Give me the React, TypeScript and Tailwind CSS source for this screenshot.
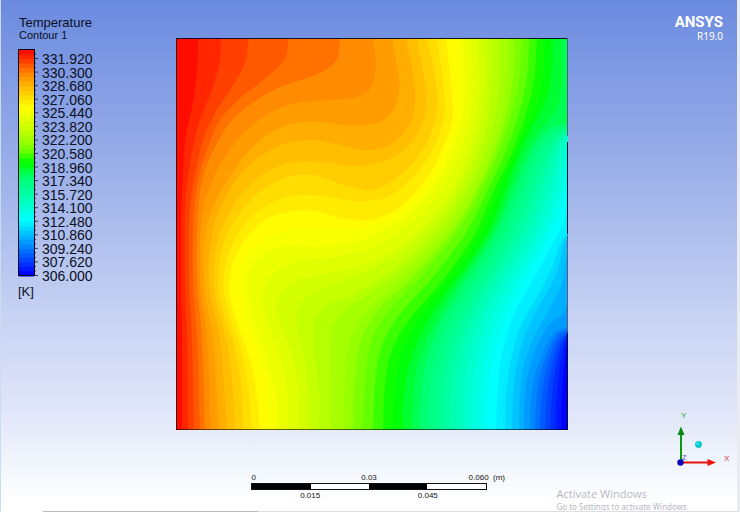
type Point = [number, number];
type Stop = [number, number, number, number];

const BANDS = 50;
const LEFT = 176;
const TOP = 38;
const RIGHT = 568;
const BOTTOM = 430;

const labels = [
  "331.920", "330.300", "328.680", "327.060", "325.440", "323.820",
  "322.200", "320.580", "318.960", "317.340", "315.720", "314.100",
  "312.480", "310.860", "309.240", "307.620", "306.000",
];

// Rainbow colour map: band index, red, green, blue.
const stops: Stop[] = [
  [0, 255, 12, 0],
  [5, 255, 140, 0],
  [7, 255, 174, 0],
  [12, 255, 252, 0],
  [13, 248, 255, 0],
  [16, 212, 255, 0],
  [20, 150, 255, 0],
  [22, 100, 255, 0],
  [24, 15, 255, 0],
  [25, 0, 255, 10],
  [26, 0, 255, 50],
  [28, 0, 255, 115],
  [31, 0, 255, 160],
  [36, 0, 255, 238],
  [37, 0, 255, 255],
  [38, 0, 238, 255],
  [40, 0, 195, 255],
  [43, 0, 135, 255],
  [46, 0, 68, 255],
  [49, 0, 0, 255],
];

// Isotherms traced from their upper end to the floor of the cavity.
const isotherms: { level: number; points: Point[] }[] = [
  { level: 1, points: [[198, 38], [197, 70], [192, 107], [185, 140], [183, 177], [181, 213], [181, 290], [182, 340], [182, 430]] },
  { level: 2, points: [[221, 38], [220, 60], [212, 90], [200, 120], [193, 147], [188, 177], [185, 213], [185, 290], [187, 340], [188, 430]] },
  { level: 3, points: [[249, 38], [245, 63], [232, 87], [215, 113], [203, 140], [196, 170], [190, 207], [189, 280], [192, 340], [194, 430]] },
  { level: 4, points: [[289, 38], [285, 58], [267, 77], [240, 98], [220, 120], [207, 150], [198, 180], [194, 213], [193, 280], [197, 340], [200, 430]] },
  { level: 5, points: [[340, 38], [338, 57], [330, 67], [310, 77], [283, 86], [257, 100], [232, 120], [215, 147], [203, 177], [198, 213], [197, 280], [202, 340], [205, 430]] },
  { level: 6, points: [[373, 38], [376, 62], [374, 80], [369, 90], [357, 97], [320, 101], [293, 104], [267, 115], [240, 137], [223, 160], [210, 187], [202, 217], [200, 280], [207, 340], [211, 430]] },
  { level: 7, points: [[392, 38], [398, 70], [399, 93], [393, 110], [380, 122], [365, 125], [345, 125], [320, 122], [297, 123], [273, 131], [247, 153], [230, 177], [215, 203], [206, 230], [204, 285], [213, 340], [219, 430]] },
  { level: 8, points: [[406, 38], [413, 75], [415, 103], [409, 125], [393, 143], [370, 150], [345, 146], [313, 140], [287, 143], [262, 155], [240, 175], [224, 200], [213, 230], [209, 285], [220, 340], [227, 430]] },
  { level: 10, points: [[427, 38], [436, 85], [437, 112], [428, 140], [408, 168], [387, 184], [370, 190], [345, 185], [313, 175], [288, 177], [262, 190], [242, 210], [226, 237], [219, 265], [219, 290], [225, 318], [234, 345], [241, 385], [243, 430]] },
  { level: 12, points: [[446, 38], [452, 97], [452, 120], [443, 148], [425, 180], [400, 207], [370, 220], [345, 219], [315, 211], [290, 211], [265, 220], [245, 240], [232, 265], [229, 290], [236, 320], [247, 350], [256, 390], [260, 430]] },
  { level: 14, points: [[463, 38], [465, 97], [455, 145], [435, 185], [405, 217], [370, 237], [340, 245], [317, 247], [290, 246], [267, 252], [253, 264], [248, 283], [250, 305], [258, 333], [268, 362], [276, 395], [278, 430]] },
  { level: 16, points: [[478, 38], [479, 97], [472, 140], [452, 190], [420, 230], [390, 253], [370, 262], [345, 270], [320, 275], [297, 280], [282, 290], [276, 305], [281, 325], [291, 352], [298, 390], [299, 430]] },
  { level: 18, points: [[492, 38], [491, 97], [482, 145], [463, 190], [433, 233], [400, 265], [370, 285], [350, 296], [327, 306], [316, 317], [313, 332], [315, 355], [319, 390], [319, 430]] },
  { level: 20, points: [[508, 38], [506, 90], [497, 135], [480, 180], [453, 225], [420, 262], [390, 290], [370, 307], [356, 325], [349, 345], [345, 380], [343, 430]] },
  { level: 22, points: [[522, 38], [519, 80], [508, 125], [490, 172], [462, 225], [425, 272], [388, 312], [371, 342], [365, 380], [363, 430]] },
  { level: 24, points: [[537, 38], [534, 80], [525, 117], [510, 157], [493, 192], [478, 228], [463, 253], [437, 287], [407, 323], [391, 353], [385, 385], [383, 430]] },
  { level: 26, points: [[553, 38], [551, 80], [543, 108], [528, 135], [514, 167], [502, 200], [490, 230], [470, 262], [445, 295], [423, 330], [410, 363], [404, 397], [403, 430]] },
  { level: 27, points: [[562, 38], [562, 85], [557, 108], [540, 130], [524, 155], [511, 187], [496, 225], [477, 257], [452, 293], [431, 330], [418, 363], [413, 397], [412, 430]] },
  { level: 28, points: [[568, 124], [555, 126], [540, 138], [527, 160], [515, 190], [500, 225], [482, 257], [458, 293], [437, 330], [426, 363], [421, 397], [420, 430]] },
  { level: 30, points: [[568, 131], [560, 133], [548, 145], [535, 170], [523, 200], [509, 232], [491, 263], [468, 300], [450, 335], [440, 370], [436, 400], [435, 430]] },
  { level: 34, points: [[568, 135], [562, 147], [555, 175], [544, 207], [530, 237], [511, 268], [489, 305], [474, 340], [466, 380], [464, 430]] },
  { level: 37, points: [[568, 168], [564, 200], [556, 222], [542, 250], [524, 282], [505, 320], [494, 355], [488, 390], [486, 430]] },
  { level: 38, points: [[568, 205], [564, 222], [553, 243], [537, 273], [515, 312], [504, 345], [498, 385], [496, 430]] },
  { level: 39, points: [[568, 233], [560, 245], [552, 267], [537, 297], [520, 327], [512, 355], [506, 392], [505, 430]] },
  { level: 40, points: [[568, 236], [564, 243], [559, 265], [551, 285], [538, 308], [526, 332], [517, 363], [513, 397], [512, 430]] },
  { level: 41, points: [[568, 238], [566, 258], [562, 283], [552, 305], [535, 335], [524, 365], [520, 397], [519, 430]] },
  { level: 42, points: [[568, 300], [564, 312], [550, 324], [539, 342], [529, 370], [525, 397], [524, 430]] },
  { level: 43, points: [[568, 327], [556, 331], [545, 348], [535, 375], [531, 402], [530, 430]] },
  { level: 46, points: [[568, 332], [560, 341], [552, 365], [547, 395], [545, 430]] },
  { level: 49, points: [[568, 335], [565, 358], [562, 390], [561, 430]] },
];

function bandColor(index: number) {
  let i = 0;
  while (i < stops.length - 2 && stops[i + 1][0] <= index) i++;
  const a = stops[i];
  const b = stops[i + 1];
  const t = (index - a[0]) / (b[0] - a[0]);
  const mix = (k: number) => Math.round(a[k] + (b[k] - a[k]) * t);
  return `rgb(${mix(1)},${mix(2)},${mix(3)})`;
}

function smooth(points: Point[]): Point[] {
  const out: Point[] = [];
  for (let i = 0; i < points.length - 1; i++) {
    const p0 = points[Math.max(0, i - 1)];
    const p1 = points[i];
    const p2 = points[i + 1];
    const p3 = points[Math.min(points.length - 1, i + 2)];
    const d1 = Math.sqrt(Math.hypot(p1[0] - p0[0], p1[1] - p0[1])) || 1;
    const d2 = Math.sqrt(Math.hypot(p2[0] - p1[0], p2[1] - p1[1])) || 1;
    const d3 = Math.sqrt(Math.hypot(p3[0] - p2[0], p3[1] - p2[1])) || 1;
    const m1 = [0, 1].map((k) =>
      i === 0 ? p2[k] - p1[k] : p2[k] - p1[k] + d2 * ((p1[k] - p0[k]) / d1 - (p2[k] - p0[k]) / (d1 + d2)));
    const m2 = [0, 1].map((k) =>
      i === points.length - 2 ? p2[k] - p1[k] : p2[k] - p1[k] + d2 * ((p3[k] - p2[k]) / d3 - (p3[k] - p1[k]) / (d2 + d3)));
    for (let s = 0; s < 10; s++) {
      const t = s / 10;
      const h = [2 * t ** 3 - 3 * t ** 2 + 1, t ** 3 - 2 * t ** 2 + t, -2 * t ** 3 + 3 * t ** 2, t ** 3 - t ** 2];
      out.push([0, 1].map((k) => h[0] * p1[k] + h[1] * m1[k] + h[2] * p2[k] + h[3] * m2[k]) as Point);
    }
  }
  out.push(points[points.length - 1]);
  return out;
}

function resample(points: Point[], count: number): Point[] {
  const lengths = [0];
  for (let i = 1; i < points.length; i++) {
    lengths.push(lengths[i - 1] + Math.hypot(points[i][0] - points[i - 1][0], points[i][1] - points[i - 1][1]));
  }
  const total = lengths[lengths.length - 1];
  const out: Point[] = [];
  let j = 0;
  for (let i = 0; i <= count; i++) {
    const target = (total * i) / count;
    while (j < points.length - 2 && lengths[j + 1] < target) j++;
    const t = (target - lengths[j]) / (lengths[j + 1] - lengths[j] || 1);
    out.push([
      points[j][0] + (points[j + 1][0] - points[j][0]) * t,
      points[j][1] + (points[j + 1][1] - points[j][1]) * t,
    ]);
  }
  return out;
}

const curves = isotherms.map(({ level, points }) => ({ level, points: resample(smooth(points), 120) }));

function regionPath(level: number) {
  let i = 0;
  while (i < curves.length - 2 && curves[i + 1].level <= level) i++;
  const a = curves[i];
  const b = curves[i + 1];
  const t = (level - a.level) / (b.level - a.level);
  const line = a.points.map((p, k) => [
    p[0] + (b.points[k][0] - p[0]) * t,
    p[1] + (b.points[k][1] - p[1]) * t,
  ]);
  return `M${line.map((p) => `${p[0].toFixed(1)} ${p[1].toFixed(1)}`).join("L")}L${RIGHT} ${BOTTOM}L${RIGHT} ${line[0][1].toFixed(1)}Z`;
}

const regions = Array.from({ length: BANDS - 1 }, (_, i) => ({ level: i + 1, d: regionPath(i + 1) }));

function ContourPlot() {
  return (
    <svg viewBox={`${LEFT} ${TOP} 392 392`} className="block aspect-square w-full overflow-visible" role="img" aria-label="Temperature contour">
      <rect x={LEFT} y={TOP} width="392" height="392" fill={bandColor(0)} />
      {regions.map(({ level, d }) => (
        <path key={level} d={d} fill={bandColor(level)} />
      ))}
      <path d="M176 38.5H568" stroke="#0a1030" />
      <path d="M176.500 38V430" stroke="#4a0a10" />
      <path d="M176 429.500H568" stroke="#000" strokeOpacity="0.6" />
      <path d="M567.500 38V136M567.500 235V332" stroke="#5a5a80" />
      <path d="M567.500 142V234M567.500 333V430" stroke="#02142c" />
    </svg>
  );
}

function ColorBar() {
  const step = 226 / BANDS;
  return (
    <svg viewBox="0 0 21 228" className="h-[228px] w-[21px] shrink-0" aria-hidden="true">
      {Array.from({ length: BANDS }, (_, i) => (
        <rect key={i} x="1" y={1 + i * step} width="15" height={step + 0.5} fill={bandColor(i)} />
      ))}
      {Array.from({ length: BANDS }, (_, i) => (
        <path key={i} d={`M17 ${1 + (i + 1) * step - 0.5}h${(i + 1) % 3 === 2 ? 3 : 1}`} stroke="#111a3a" strokeOpacity="0.8" />
      ))}
      <rect x="0.500" y="0.500" width="16" height="226" fill="none" stroke="#05081c" />
    </svg>
  );
}

function Legend() {
  return (
    <section className="flex flex-col pl-[17px] pt-4 text-[#0b0f24]">
      <h1 className="pl-px text-[13px] leading-[13px]">Temperature</h1>
      <p className="pl-px text-[11px] leading-3">Contour 1</p>
      <div className="mt-2 flex gap-[3px]">
        <ColorBar />
        <ol className="mt-1 flex h-[230px] flex-col justify-between text-[14px] leading-[13px]">
          {labels.map((label) => (
            <li key={label}>{label}</li>
          ))}
        </ol>
      </div>
      <p className="mt-0.5 text-[13px] leading-[13px]">[K]</p>
    </section>
  );
}

function ScaleBar() {
  return (
    <div className="mx-auto mt-[43px] w-3/5 text-[8px] leading-[9px] text-[#111]">
      <div className="-ml-[3px] mr-[3px]">
        <div className="flex justify-between">
          <span className="w-10">0</span>
          <span>0.03</span>
          <span className="w-10 whitespace-nowrap pl-[22px]">0.060&nbsp; (m)</span>
        </div>
        <div className="mt-px grid h-[7px] grid-cols-4 border border-[#111] bg-white">
          <span className="bg-black" />
          <span />
          <span className="bg-black" />
          <span />
        </div>
        <div className="mt-px grid grid-cols-2 text-center">
          <span>0.015</span>
          <span>0.045</span>
        </div>
      </div>
    </div>
  );
}

function Triad() {
  return (
    <svg viewBox="668 408 69 64" className="h-16 w-[69px] font-['Liberation_Sans',Arial,sans-serif]" role="img" aria-label="Axis triad">
      <path d="M681 462V434" stroke="#0b9a12" strokeWidth="2" />
      <path d="M681 426.500L684.500 435H677.500Z" fill="#078a10" />
      <path d="M681 462.500H709" stroke="#e8140c" strokeWidth="2" />
      <path d="M716 462.500L707.500 459V466Z" fill="#f0100a" />
      <circle cx="680.500" cy="462.500" r="3.200" fill="#0808b8" />
      <circle cx="698.500" cy="444.500" r="3.400" fill="#0cc4cc" />
      <circle cx="697.700" cy="443.500" r="1.500" fill="#2ce8ee" />
      <text x="681" y="418" fontSize="8" fill="#2aa03a">Y</text>
      <text x="724" y="461" fontSize="8" fill="#d8384a">X</text>
      <text x="682" y="460" fontSize="7" fill="#4a4ad0">Z</text>
    </svg>
  );
}

export default function App() {
  return (
    <main className="relative flex min-h-screen border-l border-r-3 border-l-[#c9dcf0] border-r-[#e9ebf1] bg-linear-[180deg,#6b8be0_0%,#8ea5e6_24%,#b2c2ee_48%,#c6d1f3_61%,#e3e8f9_82%,#f5f9fd_93%,#ffffff_98%] font-['Liberation_Sans',Arial,sans-serif]">
      <aside className="w-[175px] shrink-0">
        <Legend />
      </aside>
      <div className="min-w-0 flex-1 pt-[38px]">
        <ContourPlot />
        <ScaleBar />
      </div>
      <aside className="flex w-[169px] shrink-0 flex-col items-end justify-between pb-10 pt-[13px]">
        <div className="pr-3.5 text-right text-white">
          <p className="font-['Roboto',sans-serif] text-[15px] font-bold leading-[18px]">ANSYS</p>
          <p className="font-['Noto_Sans','Open_Sans',sans-serif] text-[10px] leading-[10px]">R19.0</p>
        </div>
        <Triad />
      </aside>
      <div className="absolute bottom-0 right-12 text-[#b7b8c4]">
        <p className="font-['Open_Sans',sans-serif] text-[11px] leading-[15px]">Activate Windows</p>
        <p className="font-['Noto_Sans',sans-serif] text-[8px] leading-[11px]">Go to Settings to activate Windows.</p>
      </div>
      <div className="absolute inset-x-0 bottom-0 flex h-px">
        <span className="w-[42px]" />
        <span className="w-[215px] bg-[#b8b8b8]" />
        <span className="flex-1 bg-[#dedede]" />
      </div>
    </main>
  );
}
